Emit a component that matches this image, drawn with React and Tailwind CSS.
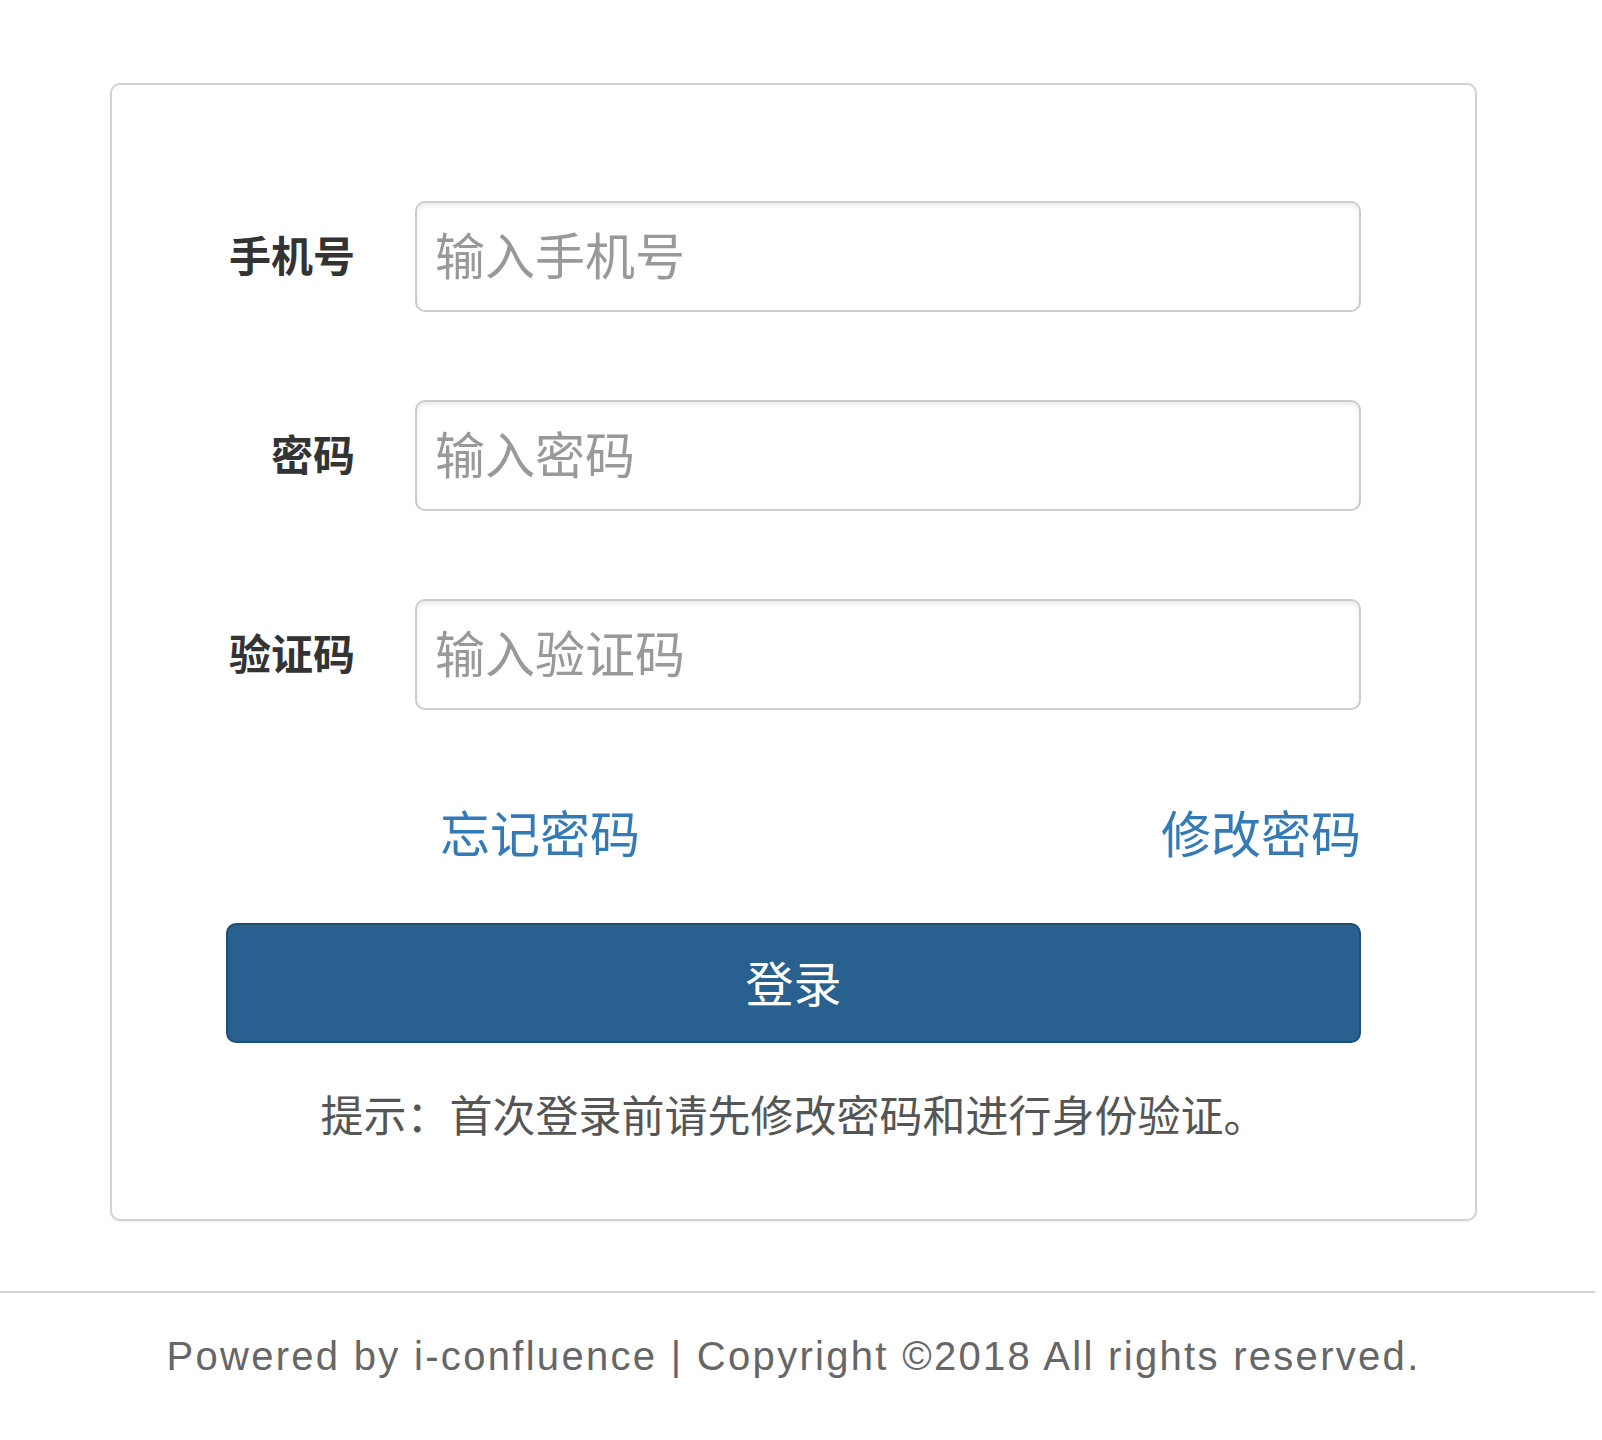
import React from "react";

const cjk = "font-['Noto_Sans_CJK_SC',sans-serif]";

function Row({ label, placeholder }) {
  return (
    <div className="flex h-[111px] items-center">
      <label
        className={`w-[189px] shrink-0 pr-[60px] pb-[6px] text-right text-[42px] font-bold leading-[60px] text-[#333] ${cjk}`}
      >
        {label}
      </label>
      <input
        type="text"
        placeholder={placeholder}
        className={`h-[111px] w-[946px] rounded-[10px] border-2 border-[#cccccc] bg-white pb-[8px] pl-[18px] text-[50px] text-[#555] shadow-[inset_0_3px_4px_rgba(0,0,0,0.08)] outline-none placeholder:text-[#999] ${cjk}`}
      />
    </div>
  );
}

export default function App() {
  return (
    <div className="min-h-[1440px] w-[1602px] bg-white pt-[83px]">
      <div className="w-[1587px]">
        <div className="ml-[110px] box-border h-[1138px] w-[1367px] rounded-[10px] border-2 border-[#d2d2d2] bg-white px-[114px] pt-[116px] shadow-[0_1px_2px_rgba(0,0,0,0.06)]">
          <div className="flex flex-col gap-[88px]">
            <Row label="手机号" placeholder="输入手机号" />
            <Row label="密码" placeholder="输入密码" />
            <Row label="验证码" placeholder="输入验证码" />
          </div>

          <div
            className={`mt-[91px] ml-[189px] flex h-[60px] items-center justify-between pl-[25px] text-[50px] leading-[60px] text-[#337ab7] ${cjk}`}
          >
            <a href="#" className="text-[#337ab7]">忘记密码</a>
            <a href="#" className="text-[#337ab7]">修改密码</a>
          </div>

          <button
            type="button"
            className={`mt-[62px] block h-[120px] w-[1135px] rounded-[10px] border-2 border-[#204d74] bg-[#286090] pb-[4px] text-[48px] leading-[60px] text-white ${cjk}`}
          >
            登录
          </button>

          <p
            className={`mt-[40px] text-center text-[43px] leading-[60px] text-[#555] ${cjk}`}
          >
            提示：首次登录前请先修改密码和进行身份验证。
          </p>
        </div>

        <div className="mt-[70px] h-[2px] w-[1595px] bg-[#d4d4d4]" />

        <p className="mt-[39px] text-center font-['Liberation_Sans',Arial,sans-serif] text-[40px] leading-[48px] tracking-[2.3px] text-[#666]">
          Powered by i-confluence | Copyright ©2018 All rights reserved.
        </p>
      </div>
    </div>
  );
}
